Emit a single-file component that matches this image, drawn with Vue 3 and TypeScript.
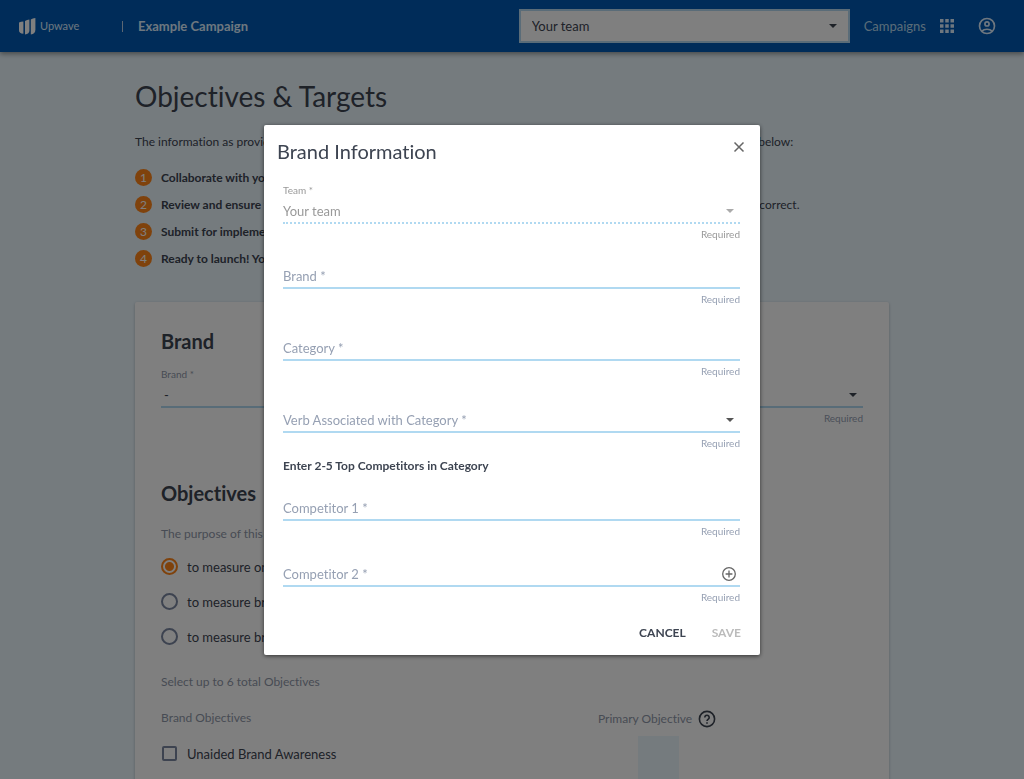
<script setup lang="ts">
import { ref } from 'vue'

interface Step { lead: string; rest: string }

const steps: Step[] = [
  { lead: 'Collaborate with your team', rest: ' to complete the information on this page.' },
  { lead: 'Review and ensure that', rest: ' all of the campaign objectives, audience groups, targets and dates shown on this page are correct.' },
  { lead: 'Submit for implementation', rest: ' when everything has been filled in.' },
  { lead: 'Ready to launch! You', rest: ' will be notified once it is live.' },
]

const goals: string[] = [
  'to measure one campaign',
  'to measure brand lift over time',
  'to measure brand health',
]

const goal = ref<number>(0)
const unaided = ref<boolean>(false)
const brand = ref<string>('')
const category = ref<string>('')
const verb = ref<string>('')
const competitors = ref<string[]>(['', ''])
</script>

<template>
  <div class="page">
    <header class="topbar">
      <a class="logo" href="#">
        <svg width="17" height="17" viewBox="0 0 17 17" aria-hidden="true">
          <path d="M0 4.6Q2 3.4 4.4 3.4V15.8Q0 15.8 0 12Z" />
          <path d="M6 3Q8 1.8 10.4 1.6V12.5Q10.4 16 6 16.4Z" />
          <path d="M11.8 1.6Q13.6.4 16.4 0V11.5Q16.4 16 11.8 16.4Z" />
        </svg>
        <span>Upwave</span>
      </a>
      <span class="divider"></span>
      <strong class="campaign">Example Campaign</strong>
      <div class="team-picker">
        <select aria-label="Team">
          <option>Your team</option>
        </select>
        <svg class="caret" width="8" height="4" viewBox="0 0 8 4" aria-hidden="true"><path d="M0 0H8L4 4Z" /></svg>
      </div>
      <a class="nav-link" href="#">Campaigns</a>
      <button class="icon-button apps" type="button" aria-label="Apps">
        <svg width="14" height="14" viewBox="0 0 14 14" fill="currentColor" aria-hidden="true">
          <path d="M0 0h3.5v3.5H0zM5.25 0h3.5v3.5h-3.5zM10.5 0H14v3.5h-3.5zM0 5.25h3.5v3.5H0zM5.25 5.25h3.5v3.5h-3.5zM10.5 5.25H14v3.5h-3.5zM0 10.5h3.5V14H0zM5.25 10.5h3.5V14h-3.5zM10.5 10.5H14V14h-3.5z" />
        </svg>
      </button>
      <button class="icon-button account" type="button" aria-label="Account">
        <svg width="20" height="20" viewBox="0 0 24 24" fill="none" stroke="currentColor" stroke-width="2" aria-hidden="true">
          <circle cx="12" cy="12" r="9" />
          <circle cx="12" cy="9.5" r="2.5" />
          <path d="M5.8 18.2C7.4 16.6 9.6 15.9 12 15.9s4.6.7 6.2 2.3" />
        </svg>
      </button>
    </header>

    <main class="content">
      <h1>Objectives &amp; Targets</h1>
      <p class="intro">The information as provided here will be used to set up your campaign study and its reports. Please follow all the steps below:</p>
      <ol class="steps">
        <li v-for="(step, i) in steps" :key="i">
          <span class="number">{{ i + 1 }}</span>
          <span><b>{{ step.lead }}</b>{{ step.rest }}</span>
        </li>
      </ol>

      <section class="card">
        <h2>Brand</h2>
        <div class="field card-field">
          <label class="small-label" for="card-brand">Brand *</label>
          <div class="control">
            <select id="card-brand" class="inset">
              <option>-</option>
            </select>
            <svg class="caret" width="8" height="4" viewBox="0 0 8 4" aria-hidden="true"><path d="M0 0H8L4 4Z" /></svg>
          </div>
          <span class="helper">Required</span>
        </div>

        <h2 class="second">Objectives</h2>
        <p class="note">The purpose of this campaign is</p>
        <div class="goals">
          <label v-for="(text, i) in goals" :key="i" class="choice">
            <input v-model="goal" type="radio" name="goal" :value="i" />
            <span>{{ text }}</span>
          </label>
        </div>
        <p class="note limit">Select up to 6 total Objectives</p>
        <div class="objectives">
          <div>
            <p class="note column-title">Brand Objectives</p>
            <label class="choice">
              <input v-model="unaided" type="checkbox" />
              <span>Unaided Brand Awareness</span>
            </label>
          </div>
          <div>
            <div class="primary-title">
              <span class="note">Primary Objective</span>
              <svg width="18" height="18" viewBox="0 0 18 18" fill="none" stroke="currentColor" stroke-width="1.6" aria-hidden="true">
                <circle cx="9" cy="9" r="7.6" />
                <path d="M6.8 7.4a2.2 2.2 0 1 1 3.5 1.8C9.5 9.8 9 10.2 9 11.1M9 12.2V13.7" />
              </svg>
            </div>
            <div class="primary-cell"></div>
          </div>
        </div>
      </section>
    </main>

    <div class="overlay">
      <form class="dialog" role="dialog" aria-modal="true" aria-labelledby="dialog-title" @submit.prevent>
        <div class="dialog-head">
          <h2 id="dialog-title">Brand Information</h2>
          <button class="icon-button close" type="button" aria-label="Close">
            <svg width="12" height="12" viewBox="0 0 12 12" fill="none" stroke="currentColor" stroke-width="1.5" aria-hidden="true"><path d="M1.5 1.5l9 9M10.5 1.5l-9 9" /></svg>
          </button>
        </div>
        <div class="fields">
          <div class="field disabled">
            <label class="small-label" for="team">Team *</label>
            <div class="control">
              <select id="team" disabled>
                <option>Your team</option>
              </select>
              <svg class="caret" width="8" height="4" viewBox="0 0 8 4" aria-hidden="true"><path d="M0 0H8L4 4Z" /></svg>
            </div>
            <span class="helper">Required</span>
          </div>
          <div class="field brand-field">
            <div class="control">
              <input id="brand" v-model="brand" type="text" />
              <label v-show="!brand" for="brand">Brand *</label>
            </div>
            <span class="helper">Required</span>
          </div>
          <div class="field spaced">
            <div class="control">
              <input id="category" v-model="category" type="text" />
              <label v-show="!category" for="category">Category *</label>
            </div>
            <span class="helper">Required</span>
          </div>
          <div class="field spaced">
            <div class="control">
              <select id="verb" v-model="verb">
                <option value=""></option>
                <option>buy</option>
                <option>use</option>
              </select>
              <label v-show="!verb" for="verb">Verb Associated with Category *</label>
              <svg class="caret" width="8" height="4" viewBox="0 0 8 4" aria-hidden="true"><path d="M0 0H8L4 4Z" /></svg>
            </div>
            <span class="helper">Required</span>
          </div>
          <h3>Enter 2-5 Top Competitors in Category</h3>
          <div class="competitors">
            <div v-for="(name, i) in competitors" :key="i" class="field">
              <div class="control">
                <input :id="`competitor-${i}`" v-model="competitors[i]" type="text" />
                <label v-show="!name" :for="`competitor-${i}`">Competitor {{ i + 1 }} *</label>
                <button v-if="i === competitors.length - 1" class="icon-button add" type="button" aria-label="Add competitor">
                  <svg width="14" height="14" viewBox="0 0 14 14" fill="none" stroke="currentColor" stroke-width="1.3" aria-hidden="true">
                    <circle cx="7" cy="7" r="6.3" />
                    <path d="M7 3.6v6.8M3.6 7h6.8" />
                  </svg>
                </button>
              </div>
              <span class="helper">Required</span>
            </div>
          </div>
        </div>
        <div class="actions">
          <button type="button">CANCEL</button>
          <button type="submit" disabled>SAVE</button>
        </div>
      </form>
    </div>
  </div>
</template>

<style>
html,
body {
  overflow: hidden;
}
</style>

<style scoped>
* {
  box-sizing: border-box;
}

.page {
  height: 100vh;
  overflow: hidden;
  background: #eaf6fd;
  color: #3d4451;
  font: 13px/20px Lato, "Liberation Sans", sans-serif;
  font-variant-ligatures: none;
}

h1,
h2,
h3,
p,
ol {
  margin: 0;
  padding: 0;
}

button,
input,
select {
  font: inherit;
  font-variant-ligatures: none;
  color: inherit;
  margin: 0;
  padding: 0;
  border: 0;
  background: none;
  outline: 0;
}

select {
  appearance: none;
  opacity: 1;
}

a {
  color: inherit;
  text-decoration: none;
}

svg {
  display: block;
  flex: none;
}

.caret {
  fill: currentColor;
}

.icon-button {
  display: grid;
  place-items: center;
}

.topbar {
  position: relative;
  display: flex;
  align-items: center;
  height: 52px;
  padding: 0 27px 0 19px;
  background: #0058b2;
  color: #dceeff;
  box-shadow: 0 2px 5px rgba(0, 0, 0, 0.4);
}

.logo {
  display: flex;
  align-items: center;
  gap: 4px;
  width: 103px;
  font-size: 11px;
}

.logo svg {
  fill: #fff;
}

.divider {
  width: 1px;
  height: 11px;
  background: #b9cfe6;
}

.campaign {
  margin-left: 15px;
  font-size: 13px;
}

.team-picker {
  display: grid;
  align-items: center;
  width: 331px;
  height: 34px;
  margin-left: auto;
  border: 2px solid #b5d8f0;
  background: #fff;
  color: #3d4451;
}

.team-picker select {
  grid-area: 1 / 1;
  height: 30px;
  padding-left: 11px;
}

.team-picker .caret {
  grid-area: 1 / 1;
  justify-self: end;
  margin-right: 11px;
}

.nav-link {
  margin-left: 14px;
  color: #b5d8f0;
}

.apps {
  margin-left: 14px;
}

.account {
  margin-left: 23px;
}

.content {
  width: calc(100% - 270px);
  margin: 0 auto;
  padding-top: 24px;
}

h1 {
  font-size: 28px;
  font-weight: 400;
  line-height: 40px;
}

.intro {
  margin-top: 16px;
  font-size: 12px;
  white-space: nowrap;
}

.steps {
  margin-top: 12px;
  list-style: none;
  font-size: 12px;
}

.steps li {
  display: flex;
  align-items: center;
  gap: 9px;
  height: 27px;
  white-space: nowrap;
}

.number {
  width: 17px;
  height: 17px;
  border-radius: 50%;
  background: #ff8519;
  color: #fff;
  line-height: 17px;
  text-align: center;
}

.card {
  margin-top: 30px;
  padding: 25px 26px;
  background: #fff;
  border-radius: 2px;
  box-shadow: 0 1px 3px rgba(0, 0, 0, 0.25);
}

.card h2 {
  font-size: 20px;
  font-weight: 700;
  line-height: 28px;
}

.card-field {
  margin-top: 12px;
}

.card .second {
  margin-top: 51px;
}

.note {
  color: #8f97a8;
  font-size: 12px;
}

.card h2 + .note {
  margin-top: 17px;
}

.goals {
  margin-top: 5px;
}

.choice {
  display: flex;
  align-items: center;
  gap: 9px;
  height: 35px;
}

.choice input {
  appearance: none;
  width: 17px;
  height: 17px;
  border: 2px solid #7a86a0;
  border-radius: 50%;
}

.choice input[type='radio']:checked {
  border-color: #ff8519;
  background: radial-gradient(circle, #ff8519 4px, transparent 5px);
}

.choice input[type='checkbox'] {
  width: 15px;
  height: 15px;
  margin: 0 1px;
  border-radius: 2px;
}

.limit {
  margin-top: 18px;
}

.objectives {
  display: grid;
  grid-template-columns: 437px 1fr;
  margin-top: 16px;
}

.column-title {
  margin-bottom: 8px;
}

.primary-title {
  display: flex;
  align-items: center;
  gap: 6px;
  height: 22px;
}

.primary-cell {
  width: 41px;
  height: 80px;
  margin: 6px 0 0 40px;
  background: #eaf6fd;
}

.field {
  display: flex;
  flex-direction: column;
}

.small-label {
  height: 15px;
  color: #8f97a8;
  font-size: 10px;
  line-height: 14px;
}

.control {
  display: grid;
  align-items: center;
  height: 26px;
  padding-top: 2px;
  border-bottom: 2px solid #b0d9f1;
}

.control > * {
  grid-area: 1 / 1;
}

.control input,
.control select {
  width: 100%;
  height: 22px;
}

.control .inset {
  padding-left: 3px;
}

.control label {
  justify-self: start;
  color: #96a0b3;
  pointer-events: none;
}

.control .caret {
  justify-self: end;
  margin-right: 6px;
  color: #555;
  pointer-events: none;
}

.card .caret {
  color: #3d4451;
}

.helper {
  align-self: flex-end;
  color: #96a0b3;
  font-size: 10px;
}

.disabled .control {
  border-bottom-style: dotted;
}

.disabled .small-label,
.disabled select,
.disabled .helper {
  color: #999;
}

.disabled .caret {
  color: #aaa;
}

.overlay {
  position: fixed;
  inset: 0;
  display: flex;
  align-items: center;
  justify-content: center;
  background: rgba(0, 0, 0, 0.5);
}

.dialog {
  width: 496px;
  max-width: 100%;
  padding-bottom: 4px;
  border-radius: 2px;
  background: #fff;
  box-shadow: 0 1px 4px rgba(0, 0, 0, 0.6);
}

.dialog-head {
  display: flex;
  align-items: center;
  justify-content: space-between;
  height: 52px;
  padding: 0 3px 0 13px;
}

.dialog-head h2 {
  font-size: 20px;
  font-weight: 400;
}

.close {
  align-self: flex-start;
  width: 36px;
  height: 36px;
  margin-top: 4px;
  color: #666;
}

.fields {
  padding: 6px 20px 0 19px;
}

.brand-field {
  margin-top: 19px;
}

.spaced {
  margin-top: 26px;
}

h3 {
  font-size: 12px;
  line-height: 26px;
}

.competitors {
  display: grid;
  gap: 20px;
  margin-top: 16px;
}

.add {
  justify-self: end;
  width: 22px;
  height: 22px;
  color: #666;
}

.actions {
  display: flex;
  justify-content: flex-end;
  gap: 10px;
  margin-top: 8px;
  padding-right: 11px;
}

.actions button {
  height: 36px;
  padding: 0 8px;
  font-size: 12px;
  font-weight: 700;
}

.actions button:disabled {
  color: #bbb;
}
</style>
